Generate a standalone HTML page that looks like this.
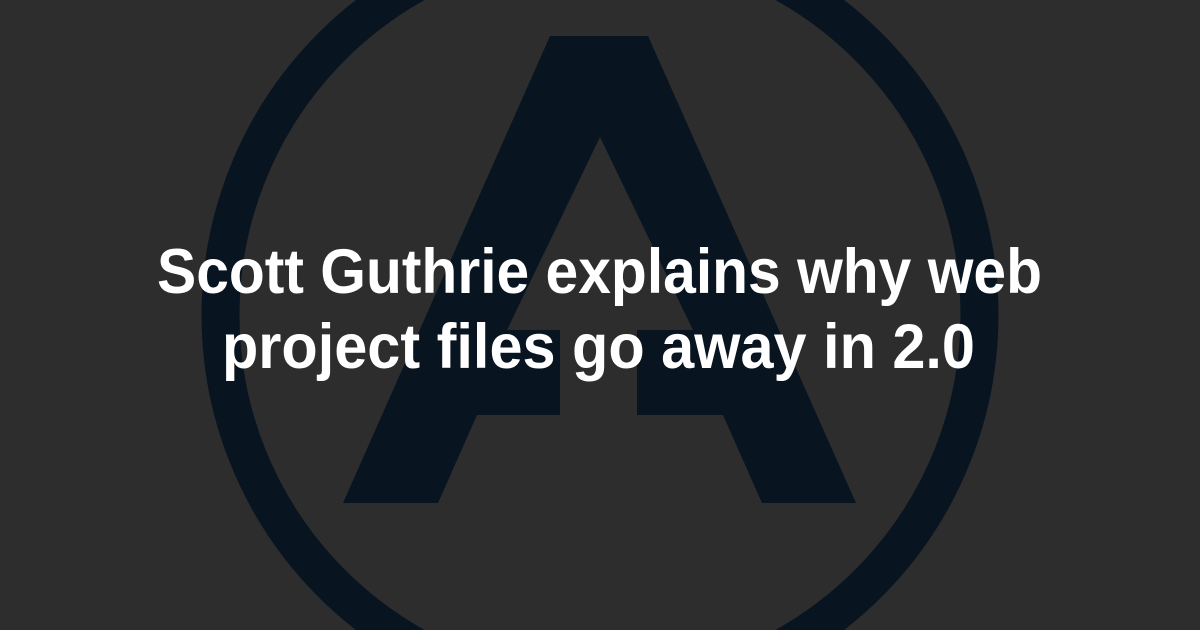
<!DOCTYPE html>
<html><head><meta charset="utf-8"><style>
html,body{margin:0;padding:0;background:#2d2d2d;overflow:hidden;}
svg{display:block;}
</style></head><body>
<svg width="1200" height="630" viewBox="0 0 1200 630" xmlns="http://www.w3.org/2000/svg">
<rect width="1200" height="630" fill="#2d2d2d"/>
<circle cx="600" cy="315" r="379.5" fill="none" stroke="#081420" stroke-width="38"/>
<polygon points="550,36 648,36 856,503 762,503 723,415 477,415 438,503 343,503" fill="#081420"/>
<polygon points="600,137 507,330 693,330" fill="#2d2d2d"/>
<rect x="560" y="329" width="77" height="87" fill="#2d2d2d"/>
<g font-family="Liberation Sans, Arial, sans-serif" font-weight="bold" font-size="63" fill="#ffffff">
<text x="157" y="293" textLength="885" lengthAdjust="spacingAndGlyphs">Scott Guthrie explains why web</text>
<text x="222" y="368" textLength="753" lengthAdjust="spacingAndGlyphs">project files go away in 2.0</text>
</g>
</svg>
</body></html>
